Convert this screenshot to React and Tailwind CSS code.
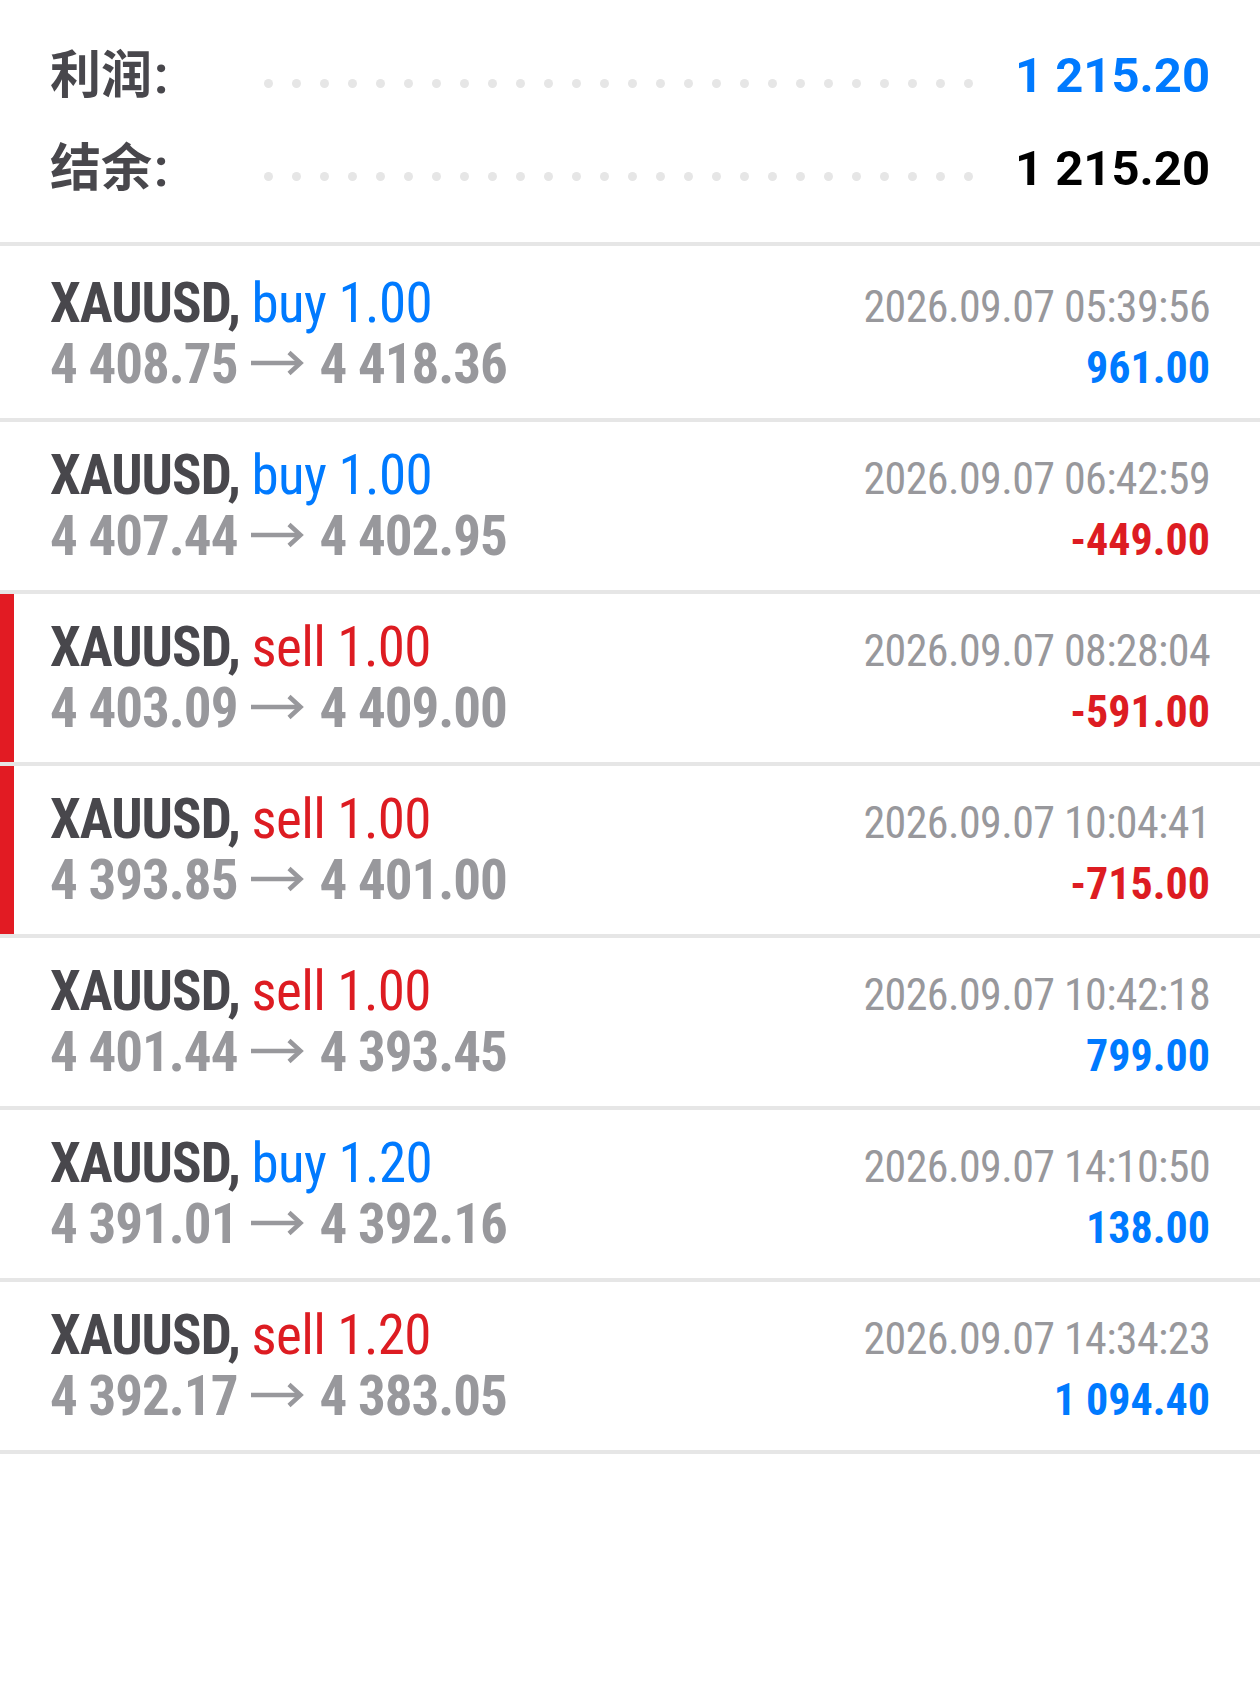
import React from "react";

const trades = [
  { side: "buy", vol: "1.00", open: "4 408.75", close: "4 418.36", time: "2026.09.07 05:39:56", profit: "961.00", bar: false },
  { side: "buy", vol: "1.00", open: "4 407.44", close: "4 402.95", time: "2026.09.07 06:42:59", profit: "-449.00", bar: false },
  { side: "sell", vol: "1.00", open: "4 403.09", close: "4 409.00", time: "2026.09.07 08:28:04", profit: "-591.00", bar: true },
  { side: "sell", vol: "1.00", open: "4 393.85", close: "4 401.00", time: "2026.09.07 10:04:41", profit: "-715.00", bar: true },
  { side: "sell", vol: "1.00", open: "4 401.44", close: "4 393.45", time: "2026.09.07 10:42:18", profit: "799.00", bar: false },
  { side: "buy", vol: "1.20", open: "4 391.01", close: "4 392.16", time: "2026.09.07 14:10:50", profit: "138.00", bar: false },
  { side: "sell", vol: "1.20", open: "4 392.17", close: "4 383.05", time: "2026.09.07 14:34:23", profit: "1 094.40", bar: false },
];

function Dots() {
  return (
    <div className="flex w-[709px] gap-[19px] mt-[16px]">
      {Array.from({ length: 26 }).map((_, i) => (
        <span key={i} className="block w-[9px] h-[9px] rounded-full bg-[#e6e6e6]" />
      ))}
    </div>
  );
}

function Arrow() {
  return (
    <svg
      width="54"
      height="26"
      viewBox="0 0 54 26"
      className="inline-block align-[7px] ml-[13px] mr-[15px]"
      fill="none"
      stroke="#98989c"
      strokeWidth="4.5"
      strokeLinecap="butt"
      strokeLinejoin="miter"
    >
      <path d="M1 13H50" />
      <path d="M39 2.5L50.5 13L39 23.5" />
    </svg>
  );
}

function SummaryRow({ label, value, valueClass }) {
  return (
    <div className="flex items-center h-[93px]">
      <div className="w-[214px] text-[51px] leading-[93px] font-bold text-[#48474c] font-['Roboto','Noto_Sans_CJK_SC',sans-serif]">
        {label}
        <span className="ml-[2px]">:</span>
      </div>
      <Dots />
      <div className={"ml-auto text-[49px] leading-[93px] font-bold font-['Roboto',sans-serif] " + valueClass}>
        {value}
      </div>
    </div>
  );
}

function TradeRow({ t, first }) {
  const sideColor = t.side === "buy" ? "text-[#007aff]" : "text-[#dd1c22]";
  const profitColor = t.profit.startsWith("-") ? "text-[#dd1c22]" : "text-[#007aff]";
  return (
    <div
      className={
        "px-[50px] pb-[23px] border-b-4 border-[#e6e6e6] font-['Roboto',sans-serif] font-stretch-condensed " +
        (first ? "pt-[27px] " : "pt-[23px] ") +
        (t.bar ? "shadow-[inset_14px_0_0_#e21b23]" : "")
      }
    >
      <div className="flex items-baseline justify-between h-[61px] leading-[61px]">
        <div className="text-[55px]">
          <span className="font-bold text-[#48474c] tracking-[-1px]">XAUUSD, </span>
          <span className={"tracking-[-0.6px] " + sideColor}>
            {t.side} {t.vol}
          </span>
        </div>
        <div className="text-[44px] leading-none tracking-[-0.6px] text-[#98989c]">{t.time}</div>
      </div>
      <div className="flex items-baseline justify-between h-[61px] leading-[61px]">
        <div className="text-[55px] font-bold text-[#98989c] tracking-[-1px] whitespace-nowrap">
          {t.open}
          <Arrow />
          {t.close}
        </div>
        <div className={"text-[44px] leading-none font-bold " + profitColor}>{t.profit}</div>
      </div>
    </div>
  );
}

export default function App() {
  return (
    <div className="w-[1260px] min-h-[1686px] bg-white">
      <div className="px-[50px] pt-[29px] pb-[27px] border-b-4 border-[#e6e6e6]">
        <SummaryRow label="利润" value="1 215.20" valueClass="text-[#007aff]" />
        <SummaryRow label="结余" value="1 215.20" valueClass="text-black" />
      </div>
      {trades.map((t, i) => (
        <TradeRow key={i} t={t} first={i === 0} />
      ))}
    </div>
  );
}
